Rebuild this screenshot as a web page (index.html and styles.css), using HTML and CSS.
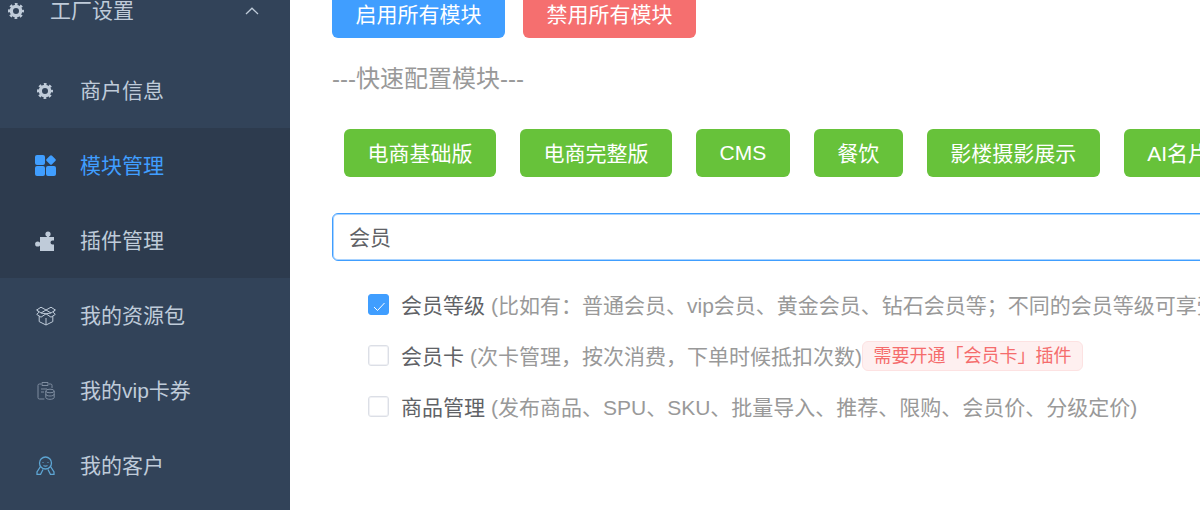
FILE: index.html
```html
<!DOCTYPE html>
<html lang="zh-CN">
<head>
<meta charset="utf-8">
<title>模块管理</title>
<link rel="stylesheet" href="styles.css">
</head>
<body>
<div class="layout">
  <aside class="sidebar">
    <div class="group-title">
      <svg class="gear gear-top" viewBox="0 0 24 24"><circle class="gear-ring" cx="12" cy="12" r="7"/><circle class="gear-teeth" cx="12" cy="12" r="10"/></svg>
      <span class="group-label label">工厂设置</span>
      <svg class="chevron" viewBox="0 0 14 8"><path d="M1 7 7 1.200 13 7"/></svg>
    </div>
    <a class="item"><span class="slot"><svg class="gear ic-gear" viewBox="0 0 24 24"><circle class="gear-ring" cx="12" cy="12" r="7"/><circle class="gear-teeth" cx="12" cy="12" r="10"/></svg></span><span class="label">商户信息</span></a>
    <div class="submenu">
      <a class="item active"><span class="slot"><svg class="ic-grid" viewBox="0 0 21 21"><rect x="0" y="0" width="10" height="10" rx="2"/><rect x="11" y="11" width="10" height="10" rx="2"/><rect x="0" y="11" width="10" height="10" rx="2"/><rect x="12.200" y="1.200" width="7.600" height="7.600" rx="1.500" transform="rotate(45 16 5)"/></svg></span><span class="label">模块管理</span></a>
      <a class="item"><span class="slot"><svg class="ic-puzzle" viewBox="0 0 19 20"><circle cx="13" cy="3" r="2.600"/><circle cx="2.700" cy="13" r="2.600"/><path d="M12 5h2v1h-2zM4.500 12h1v2h-1z"/><path d="M5 6h14v3.500h-1.500a2 2 0 1 0 0 4H19V20H5z"/></svg></span><span class="label">插件管理</span></a>
    </div>
    <a class="item"><span class="slot"><svg class="ic-box" viewBox="0 0 20 20"><path d="M10 4 15 1.200 19.300 4 15 7 10 4 5 1.200.7 4 5 7zM.7 4 3 6.200.7 8.400 5 11.200l5-3.400 5 3.400 4.300-2.800L17 6.200 19.300 4M5 7l5 .8 5-.8M3.200 10v5.600L10 19l6.800-3.400V10M10 12v7"/></svg></span><span class="label">我的资源包</span></a>
    <a class="item"><span class="slot"><svg class="ic-card" viewBox="0 0 18 19"><path d="M4 3H2.400A1.400 1.400 0 0 0 1 4.400v12.200A1.400 1.400 0 0 0 2.400 18h5M12 3h1.600A1.400 1.400 0 0 1 15 4.400V7M5 1.500h6V4.500H5zM4 8h6M4 11h3"/><ellipse cx="13" cy="10" rx="4.200" ry="1.800"/><path d="M8.800 10v6.500c0 1 1.900 1.800 4.200 1.800s4.200-.8 4.200-1.800V10M8.800 13.200c0 1 1.900 1.800 4.200 1.800s4.200-.8 4.200-1.800"/></svg></span><span class="label">我的vip卡券</span></a>
    <a class="item"><span class="slot"><svg class="ic-user" viewBox="0 0 19 19"><circle cx="9.500" cy="7" r="6"/><path d="M7 6.200v.8M12 6.200v.8M7.500 9.500q2 1.400 4 0M4.500 10.500 1 16v2.500h3.500L7 13.500M14.500 10.500 18 16v2.500h-3.500L12 13.500"/></svg></span><span class="label">我的客户</span></a>
  </aside>
  <main class="content">
    <div class="actions">
      <button class="btn btn-primary">启用所有模块</button>
      <button class="btn btn-danger">禁用所有模块</button>
    </div>
    <div class="section-title">---快速配置模块---</div>
    <div class="presets">
      <button class="btn btn-success">电商基础版</button>
      <button class="btn btn-success">电商完整版</button>
      <button class="btn btn-success btn-latin">CMS</button>
      <button class="btn btn-success">餐饮</button>
      <button class="btn btn-success">影楼摄影展示</button>
      <button class="btn btn-success">AI名片展示</button>
    </div>
    <input class="search" type="text" value="会员">
    <ul class="modules">
      <li class="module">
        <span class="check checked"><svg viewBox="0 0 21 21"><path d="M6 13 9.500 16.500 16.500 9"/></svg></span>
        <span class="name">会员等级</span>
        <span class="desc">(比如有：普通会员、vip会员、黄金会员、钻石会员等；不同的会员等级可享受不同的折扣和权益)</span>
      </li>
      <li class="module">
        <span class="check"></span>
        <span class="name">会员卡</span>
        <span class="desc">(次卡管理，按次消费，下单时候抵扣次数)</span>
        <span class="tag">需要开通「会员卡」插件</span>
      </li>
      <li class="module">
        <span class="check"></span>
        <span class="name">商品管理</span>
        <span class="desc">(发布商品、SPU、SKU、批量导入、推荐、限购、会员价、分级定价)</span>
      </li>
    </ul>
  </main>
</div>
</body>
</html>
```

FILE: styles.css
```css
* { box-sizing: border-box; }
html, body { margin: 0; height: 510px; overflow: hidden; background: #fff; }
body { font-family: "Liberation Sans", "Noto Sans CJK SC", sans-serif; font-size: 21px; }

.layout { display: flex; height: 541px; margin-top: -31px; }

.sidebar { width: 290px; flex: none; background: #324359; color: #bfcbd9; }
.label { padding-bottom: 4px; }
.group-title { display: flex; align-items: center; height: 84px; padding-left: 8px; }
.gear { fill: none; stroke: #bfcbd9; }
.gear-ring { stroke-width: 5; }
.gear-teeth { stroke-width: 4; stroke-dasharray: 4 3.854; stroke-dashoffset: 2; }
.gear-top { width: 16px; height: 16px; }
.group-label { margin-left: 26px; }
.chevron { width: 14px; height: 8px; margin-left: 111px; fill: none; stroke: #bfcbd9; stroke-width: 1.300; }
.item { display: flex; align-items: center; height: 75px; color: #bfcbd9; }
.slot { width: 80px; flex: none; padding-left: 35px; display: flex; align-items: center; }
.submenu { background: #2d3b4e; }
.item.active { color: #409eff; }
.ic-gear { width: 16px; height: 16px; margin-left: 2px; }
.ic-grid { width: 21px; height: 21px; fill: #409eff; }
.ic-puzzle { width: 19px; height: 20px; fill: #bfcbd9; }
.ic-box { width: 20px; height: 20px; margin-left: 1px; fill: none; stroke: #bfcbd9; stroke-width: 1; }
.ic-card { width: 18px; height: 19px; margin-left: 2px; fill: none; stroke: #7f8da0; stroke-width: 1; }
.ic-user { width: 19px; height: 19px; margin-left: 1px; fill: none; stroke: #5da5d3; stroke-width: 1.300; }

.content { flex: 1; min-width: 0; overflow: hidden; padding: 21px 0 0 42px; }
.btn { display: inline-flex; align-items: center; justify-content: center; height: 48px; padding: 0 23.500px 2px; border: 0; border-radius: 6px; color: #fff; font: inherit; flex: none; }
.btn-latin { padding-bottom: 0; }
.actions { display: flex; gap: 18px; }
.btn-primary { background: #409eff; }
.btn-danger { background: #f56f6f; }
.btn-success { background: #67c23a; }
.section-title { margin-top: 23px; height: 36px; line-height: 36px; font-size: 24px; color: #999; }
.presets { display: flex; gap: 24px; margin-top: 32px; padding-left: 12px; }
.search { display: block; width: 1000px; height: 48px; margin-top: 36px; padding: 0 16px 3px; border: 1px solid #409eff; border-radius: 6px; box-shadow: inset 0 0 0 1px rgba(64, 158, 255, .45); color: #606266; font: inherit; outline: 0; }
.modules { list-style: none; margin: 18px 0 0; padding: 0 0 0 36px; }
.module { display: flex; align-items: center; height: 51px; white-space: nowrap; }
.check { width: 21px; height: 21px; flex: none; margin-right: 12px; border: 1px solid #dcdfe6; border-radius: 3px; background: #fff; box-shadow: inset 0 0 0 1px #f0f1f5; }
.check.checked { background: #409eff; border-color: #409eff; box-shadow: none; }
.check svg { display: block; width: 21px; height: 21px; margin: -1px; fill: none; stroke: #fff; stroke-width: 1; }
.name { color: #606266; padding-bottom: 2px; }
.desc { margin-left: 6px; color: #999; padding-bottom: 2px; }
.tag { display: inline-flex; align-items: center; height: 30px; padding: 0 10.500px 3px; border: 1px solid #fde2e2; border-radius: 6px; background: #fef0f0; color: #f56c6c; font-size: 18px; }
```
